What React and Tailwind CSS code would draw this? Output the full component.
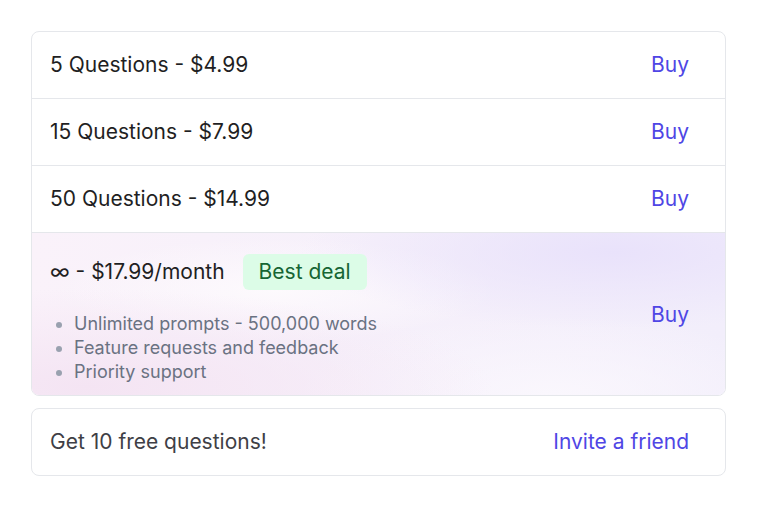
export default function App() {
  const packs = [
    { label: "5 Questions - $4.99" },
    { label: "15 Questions - $7.99" },
    { label: "50 Questions - $14.99" },
  ];

  return (
    <div className="min-h-screen bg-white pl-[31px] pt-[31px] font-['Inter',sans-serif]">
      <div className="w-[695px]">
        <div className="rounded-lg border border-gray-200 overflow-hidden">
          {packs.map((p) => (
            <div
              key={p.label}
              className="flex items-center justify-between border-b border-gray-200 pl-[18px] pr-[36px] py-[19px]"
            >
              <span className="text-[21px] leading-7 text-[#1f1f23]">{p.label}</span>
              <button className="text-[21px] leading-7 text-[#4f46e5]">Buy</button>
            </div>
          ))}

          {/* Subscription */}
          <div className="flex items-center justify-between pl-[18px] pr-[36px] pt-[21px] pb-[11px] bg-[radial-gradient(ellipse_at_84%_12%,#e9e2fb_0%,transparent_38%),radial-gradient(ellipse_at_8%_95%,#f4e4f3_0%,transparent_45%),radial-gradient(ellipse_at_35%_35%,#fdfafd_0%,transparent_35%),radial-gradient(ellipse_at_75%_100%,#faf7fd_0%,transparent_35%),linear-gradient(to_right,#faf2fa,#f2eefb)]">
            <div>
              <div className="flex items-center gap-[18px]">
                <span className="text-[21px] leading-7 text-[#1f1f23]">∞ - $17.99/month</span>
                <span className="rounded-md bg-[#dcfce7] px-4 py-1 text-[21px] leading-7 text-[#166534]">
                  Best deal
                </span>
              </div>
              <ul className="mt-[22px] list-disc pl-6 text-lg leading-6 text-gray-500 marker:text-gray-400">
                <li>Unlimited prompts - 500,000 words</li>
                <li>Feature requests and feedback</li>
                <li>Priority support</li>
              </ul>
            </div>
            <button className="mb-[8px] text-[21px] leading-7 text-[#4f46e5]">Buy</button>
          </div>
        </div>

        <div className="mt-[12px] flex items-center justify-between rounded-lg border border-gray-200 pl-[18px] pr-[36px] py-[19px]">
          <span className="text-[21px] leading-7 text-[#3f3f46]">Get 10 free questions!</span>
          <button className="text-[21px] leading-7 text-[#4f46e5]">Invite a friend</button>
        </div>
      </div>
    </div>
  );
}
